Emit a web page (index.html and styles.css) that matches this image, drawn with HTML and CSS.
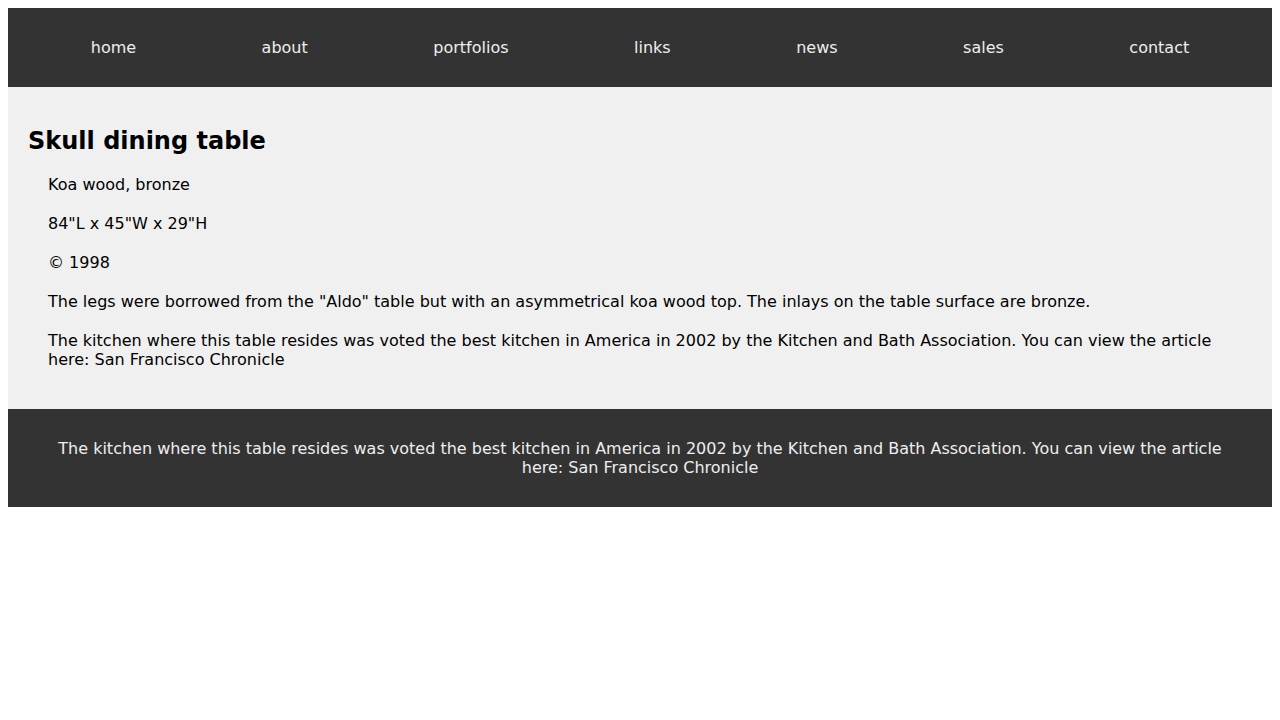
FILE: index.html
```html
<!DOCTYPE html>
<html lang="en">
<head>
<meta charset="utf-8">
<title>Skull dining table</title>
<link rel="stylesheet" href="styles.css">
</head>
<body>
<nav class="nav">
  <a class="nav-link" href="#">home</a>
  <a class="nav-link" href="#">about</a>
  <a class="nav-link" href="#">portfolios</a>
  <a class="nav-link" href="#">links</a>
  <a class="nav-link" href="#">news</a>
  <a class="nav-link" href="#">sales</a>
  <a class="nav-link" href="#">contact</a>
</nav>
<main class="content">
  <h2 class="title">Skull dining table</h2>
  <p class="text">Koa wood, bronze</p>
  <p class="text">84"L x 45"W x 29"H</p>
  <p class="text">© 1998</p>
  <p class="text">The legs were borrowed from the "Aldo" table but with an asymmetrical koa wood top. The inlays on the table surface are bronze.</p>
  <p class="text">The kitchen where this table resides was voted the best kitchen in America in 2002 by the Kitchen and Bath Association. You can view the article here: San Francisco Chronicle</p>
</main>
<footer class="footer">
  <p class="footer-text">The kitchen where this table resides was voted the best kitchen in America in 2002 by the Kitchen and Bath Association. You can view the article here: San Francisco Chronicle</p>
</footer>
</body>
</html>
```
FILE: styles.css
```css
body {
  margin: 8px;
  font-family: "DejaVu Sans", sans-serif;
  font-size: 16px;
  color: #000;
  background: #fff;
}
.nav {
  display: flex;
  justify-content: space-around;
  background: #333333;
  padding: 20px;
}
.nav-link {
  color: #eeeeee;
  text-decoration: none;
  padding: 10px;
  line-height: 19px;
}
.content {
  display: block;
  background: #f0f0f0;
  padding: 20px;
  overflow: hidden;
}
.title {
  font-size: 24px;
  font-weight: bold;
  margin: 20px 0;
  line-height: 28px;
}
.text {
  margin: 20px;
  line-height: 19px;
}
.footer {
  background: #333333;
  color: #eeeeee;
  padding: 10px 20px;
  text-align: center;
}
.footer-text {
  margin: 20px;
  line-height: 19px;
}
```
